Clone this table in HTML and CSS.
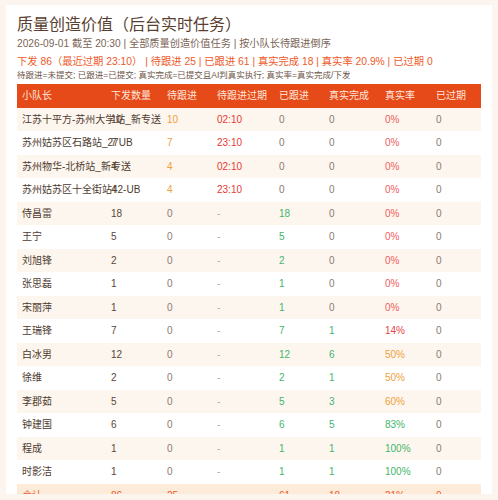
FILE: index.html
```html
<!DOCTYPE html>
<html lang="zh-CN">
<head>
<meta charset="utf-8">
<title>质量创造价值（后台实时任务）</title>
<link rel="stylesheet" href="styles.css">
</head>
<body>
<div class="card">
  <h1 class="title">质量创造价值（后台实时任务）</h1>
  <div class="meta">2026-09-01 截至 20:30 | 全部质量创造价值任务 | 按小队长待跟进倒序</div>
  <div class="summary">下发 86（最近过期 23:10） | 待跟进 25 | 已跟进 61 | 真实完成 18 | 真实率 20.9% | 已过期 0</div>
  <div class="legend">待跟进=未提交; 已跟进=已提交; 真实完成=已提交且AI判真实执行; 真实率=真实完成/下发</div>
  <table class="grid">
    <colgroup>
      <col class="c1"><col class="c2"><col class="c3"><col class="c4"><col class="c5"><col class="c6"><col class="c7"><col class="c8">
    </colgroup>
    <thead>
      <tr><th>小队长</th><th>下发数量</th><th>待跟进</th><th>待跟进过期</th><th>已跟进</th><th>真实完成</th><th>真实率</th><th>已过期</th></tr>
    </thead>
    <tbody>
      <tr><td class="name">江苏十平方-苏州大学站_新专送</td><td class="num">10</td><td class="warn">10</td><td class="late">02:10</td><td class="zero">0</td><td class="zero">0</td><td class="bad">0%</td><td class="zero">0</td></tr>
      <tr><td class="name">苏州姑苏区石路站_27UB</td><td class="num">7</td><td class="warn">7</td><td class="late">23:10</td><td class="zero">0</td><td class="zero">0</td><td class="bad">0%</td><td class="zero">0</td></tr>
      <tr><td class="name">苏州物华-北桥站_新专送</td><td class="num">4</td><td class="warn">4</td><td class="late">02:10</td><td class="zero">0</td><td class="zero">0</td><td class="bad">0%</td><td class="zero">0</td></tr>
      <tr><td class="name">苏州姑苏区十全街站42-UB</td><td class="num">4</td><td class="warn">4</td><td class="late">23:10</td><td class="zero">0</td><td class="zero">0</td><td class="bad">0%</td><td class="zero">0</td></tr>
      <tr><td class="name">侍昌雷</td><td class="num">18</td><td class="zero">0</td><td class="dash">-</td><td class="good">18</td><td class="zero">0</td><td class="bad">0%</td><td class="zero">0</td></tr>
      <tr><td class="name">王宁</td><td class="num">5</td><td class="zero">0</td><td class="dash">-</td><td class="good">5</td><td class="zero">0</td><td class="bad">0%</td><td class="zero">0</td></tr>
      <tr><td class="name">刘旭锋</td><td class="num">2</td><td class="zero">0</td><td class="dash">-</td><td class="good">2</td><td class="zero">0</td><td class="bad">0%</td><td class="zero">0</td></tr>
      <tr><td class="name">张思磊</td><td class="num">1</td><td class="zero">0</td><td class="dash">-</td><td class="good">1</td><td class="zero">0</td><td class="bad">0%</td><td class="zero">0</td></tr>
      <tr><td class="name">宋丽萍</td><td class="num">1</td><td class="zero">0</td><td class="dash">-</td><td class="good">1</td><td class="zero">0</td><td class="bad">0%</td><td class="zero">0</td></tr>
      <tr><td class="name">王瑞锋</td><td class="num">7</td><td class="zero">0</td><td class="dash">-</td><td class="good">7</td><td class="good">1</td><td class="bad strong">14%</td><td class="zero">0</td></tr>
      <tr><td class="name">白冰男</td><td class="num">12</td><td class="zero">0</td><td class="dash">-</td><td class="good">12</td><td class="good">6</td><td class="mid">50%</td><td class="zero">0</td></tr>
      <tr><td class="name">徐维</td><td class="num">2</td><td class="zero">0</td><td class="dash">-</td><td class="good">2</td><td class="good">1</td><td class="mid">50%</td><td class="zero">0</td></tr>
      <tr><td class="name">李郡茹</td><td class="num">5</td><td class="zero">0</td><td class="dash">-</td><td class="good">5</td><td class="good">3</td><td class="mid">60%</td><td class="zero">0</td></tr>
      <tr><td class="name">钟建国</td><td class="num">6</td><td class="zero">0</td><td class="dash">-</td><td class="good">6</td><td class="good">5</td><td class="good">83%</td><td class="zero">0</td></tr>
      <tr><td class="name">程成</td><td class="num">1</td><td class="zero">0</td><td class="dash">-</td><td class="good">1</td><td class="good">1</td><td class="good">100%</td><td class="zero">0</td></tr>
      <tr><td class="name">时影洁</td><td class="num">1</td><td class="zero">0</td><td class="dash">-</td><td class="good">1</td><td class="good">1</td><td class="good">100%</td><td class="zero">0</td></tr>
    </tbody>
    <tfoot>
      <tr><td>合计</td><td>86</td><td>25</td><td class="dash">-</td><td>61</td><td>18</td><td>21%</td><td>0</td></tr>
    </tfoot>
  </table>
</div>
</body>
</html>
```

FILE: styles.css
```css
html, body {
  margin: 0;
  padding: 0;
}
body {
  background: #fcf4ee;
  padding: 5px 6px 0 6px;
  font-family: "Liberation Sans", "Noto Sans CJK SC", sans-serif;
  color: #4e3b30;
}
.card {
  background: #ffffff;
  height: 489px;
  box-sizing: border-box;
  padding: 10px 11px;
  overflow: visible;
}
.title {
  margin: 0;
  font-size: 16px;
  font-weight: normal;
  line-height: 20px;
  color: #5a3f30;
}
.meta {
  margin-top: 2px;
  font-size: 10.2px;
  line-height: 14px;
  color: #7b6456;
}
.summary {
  margin-top: 4px;
  font-size: 10.3px;
  line-height: 14px;
  color: #ee5a2a;
}
.legend {
  font-size: 8.5px;
  line-height: 12px;
  color: #6b5446;
}
.grid {
  margin-top: 3px;
  width: 464px;
  table-layout: fixed;
  border-collapse: collapse;
  font-size: 10px;
}
.c1 { width: 89px; }
.c2 { width: 56px; }
.c3 { width: 50px; }
.c4 { width: 62px; }
.c5 { width: 50px; }
.c6 { width: 56px; }
.c7 { width: 51px; }
.c8 { width: 50px; }
.grid th, .grid td {
  padding: 5px 5px;
  line-height: 13.5px;
  text-align: left;
  white-space: nowrap;
  overflow: visible;
  font-weight: normal;
}
.grid thead th {
  background: #e64a19;
  color: #fde6dc;
}
.grid tbody tr:nth-child(odd) td {
  background: #fdf6ee;
}
.grid tbody tr:nth-child(even) td {
  background: #ffffff;
}
.grid tbody td.name { color: #4e3b30; }
.grid tbody td.num { color: #5b4636; }
.zero { color: #8c7b70; }
.warn { color: #eea03a; }
.late { color: #e53935; }
.dash { color: #b5a9a0; }
.good { color: #43b56d; }
.bad { color: #f06060; }
.bad.strong { color: #e84545; }
.mid { color: #f0a040; }
.grid tfoot td {
  background: #fdebd9;
  color: #ea5a2c;
}
.grid tfoot td.dash { color: #c0a898; }
```
